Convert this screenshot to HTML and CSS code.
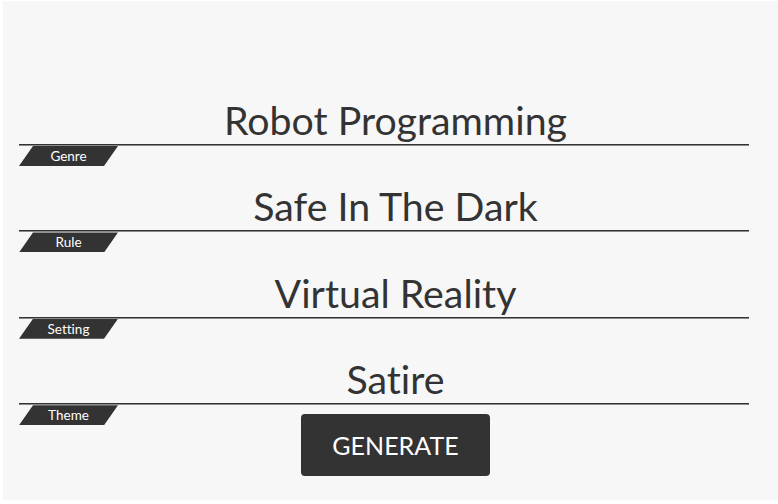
FILE: index.html
```html
<!DOCTYPE html>
<html>
<head>
<meta charset="utf-8">
<link rel="stylesheet" href="styles.css">
</head>
<body>
<div class="panel">
  <div class="row">
    <div class="title">Robot Programming</div>
    <span class="tag">Genre</span>
  </div>
  <div class="row">
    <div class="title">Safe In The Dark</div>
    <span class="tag">Rule</span>
  </div>
  <div class="row">
    <div class="title">Virtual Reality</div>
    <span class="tag">Setting</span>
  </div>
  <div class="row row-last">
    <div class="title">Satire</div>
    <span class="tag">Theme</span>
  </div>
  <div class="actions">
    <button class="generate">GENERATE</button>
  </div>
</div>
</body>
</html>
```
FILE: styles.css
```css
html, body {
  margin: 0;
  padding: 0;
  background: #ffffff;
  overflow: hidden;
}
.panel {
  margin: 1px 0 0 3px;
  height: 499px;
  background: #f7f7f7;
  padding-top: 95px;
  box-sizing: border-box;
  font-family: Lato, "Open Sans", sans-serif;
  font-variant-ligatures: none;
}
.row {
  position: relative;
  margin-left: 16px;
  width: 730px;
  margin-bottom: 37.4px;
}
.row-last {
  margin-bottom: 0;
}
.title {
  text-align: center;
  padding-left: 23px;
  font-size: 39.3px;
  line-height: 48px;
  color: #333333;
  border-bottom: 1px solid #333333;
  box-shadow: 0 1px 0 #8a8a8a;
}
.tag {
  position: absolute;
  left: 0;
  top: 50px;
  width: 99px;
  height: 20px;
  background: #333333;
  color: #ffffff;
  font-size: 13.5px;
  line-height: 20px;
  text-align: center;
  clip-path: polygon(14px 0, 100% 0, calc(100% - 14px) 100%, 0 100%);
}
.actions {
  margin-left: 16px;
  width: 730px;
  padding-left: 23px;
  box-sizing: border-box;
  display: flex;
  justify-content: center;
  padding-top: 10px;
}
.generate {
  width: 189px;
  height: 62px;
  border: none;
  border-radius: 4px;
  background: #333333;
  color: #ffffff;
  font-family: Lato, "Open Sans", sans-serif;
  font-size: 25px;
  padding: 0;
}
```
